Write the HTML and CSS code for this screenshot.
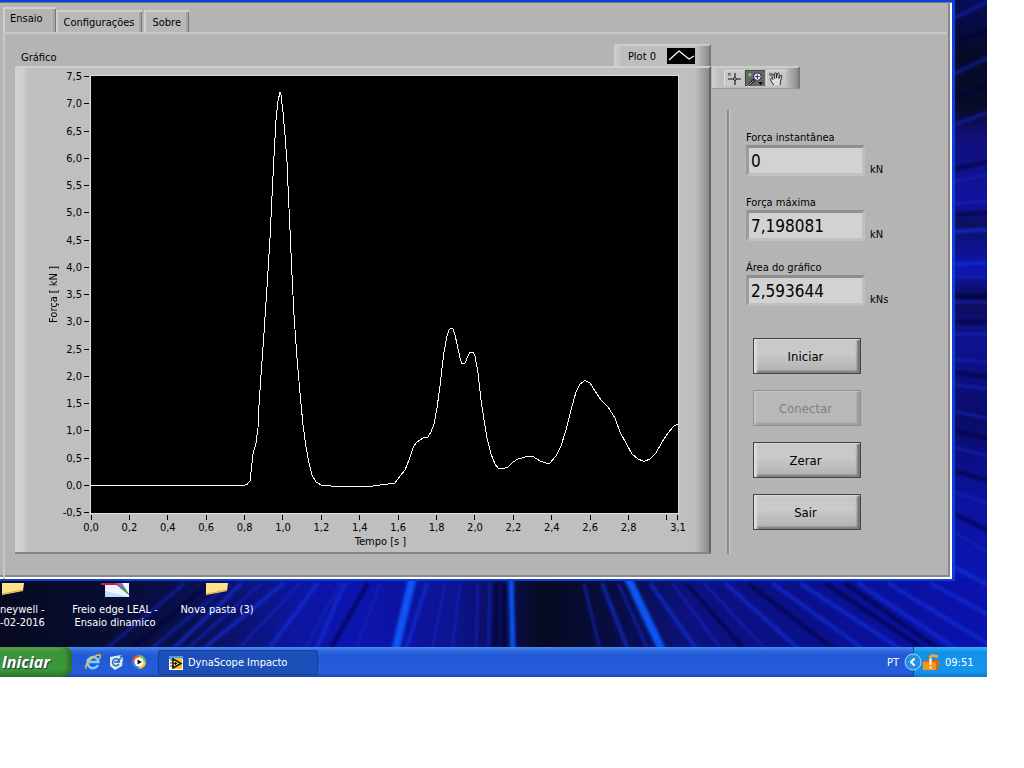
FILE: index.html
```html
<!DOCTYPE html>
<html lang="pt">
<head>
<meta charset="utf-8">
<title>DynaScope Impacto</title>
<link rel="stylesheet" href="styles.css">
</head>
<body>
<div class="desktop">
  <svg class="wallpaper" viewBox="0 0 987 677" preserveAspectRatio="none" aria-hidden="true">
    <defs>
      <linearGradient id="side" x1="0" y1="0" x2="0" y2="1">
        <stop offset="0" stop-color="#080c58"/><stop offset=".08" stop-color="#060a28"/><stop offset=".16" stop-color="#070b28"/>
        <stop offset=".2" stop-color="#101078"/><stop offset=".3" stop-color="#1212a0"/><stop offset=".33" stop-color="#0c1060"/>
        <stop offset=".4" stop-color="#1014b4"/><stop offset=".44" stop-color="#0a0c50"/><stop offset=".5" stop-color="#0e1290"/>
        <stop offset=".62" stop-color="#0a0c68"/><stop offset=".74" stop-color="#0c12a0"/><stop offset="1" stop-color="#0a18c8"/>
      </linearGradient>
      <linearGradient id="floor">
        <stop offset="0" stop-color="#070a20"/><stop offset=".1" stop-color="#080c30"/><stop offset=".2" stop-color="#0a1050"/>
        <stop offset=".3" stop-color="#0d16a0"/><stop offset=".36" stop-color="#0c14b0"/><stop offset=".46" stop-color="#0e1490"/>
        <stop offset=".5" stop-color="#0a0f60"/><stop offset=".55" stop-color="#060a20"/><stop offset=".62" stop-color="#080d40"/>
        <stop offset=".7" stop-color="#0c1280"/><stop offset=".8" stop-color="#0a1088"/><stop offset="1" stop-color="#0b12b0"/>
      </linearGradient>
      <filter id="soft"><feGaussianBlur stdDeviation="1.800"/></filter>
    </defs>
    <rect width="987" height="677" fill="url(#side)"/>
    <rect y="578" width="987" height="99" fill="url(#floor)"/>
    <g filter="url(#soft)" fill="none">
      <g stroke="#1424b0" stroke-width="3" opacity=".8">
        <path d="M950 20 995 -2M950 76 995 54M950 126 995 110"/>
        <path d="M950 182 995 174M950 204 995 200M950 277 995 277M950 302 995 302M950 334 995 334M950 359 995 363M950 384 995 390"/>
        <path d="M950 410 995 420M950 446 995 458M950 490 995 506M950 530 995 556M940 560 995 590"/>
        <path d="M185 583 105 650M230 583 150 650M262 583 186 650M300 583 238 650M340 583 305 650M380 583 356 650"/>
        <path d="M445 583 432 650M460 583 452 650M478 583 476 650M490 583 488 650"/>
        <path d="M584 583 600 650M618 583 648 650M672 583 722 650M704 583 766 650"/>
      </g>
      <g stroke="#1030d8" stroke-width="4" opacity=".7">
        <path d="M950 232 995 229M950 264 995 263"/>
        <path d="M242 583 172 650M284 583 202 650M318 583 268 650M345 583 316 650M427 583 406 650M602 583 628 650"/>
        <path d="M650 583 697 650M725 583 800 650M772 583 865 650M800 583 902 650M858 583 958 650M888 583 995 648M930 583 995 618M950 565 995 588"/>
      </g>
      <g stroke="#070a38" stroke-width="4" opacity=".65">
        <path d="M950 44 995 28M950 100 995 82M950 170 995 160M950 215 995 212M950 296 995 296M950 322 995 322M950 372 995 378M950 430 995 440M950 470 995 482M950 512 995 534"/>
        <path d="M210 583 130 650M368 583 330 650M496 583 496 650M504 583 504 650M686 583 745 650M748 583 835 650M825 583 925 650M845 583 940 650"/>
      </g>
      <path d="M413 576 394 656" stroke="#0a55f4" stroke-width="8"/>
      <path d="M511 576 513 656" stroke="#0a55f4" stroke-width="5"/>
      <path d="M627 576 662 650" stroke="#0a55f4" stroke-width="8"/>
    </g>
  </svg>

  <main class="window">
    <nav class="tabs">
      <button class="tab tab-active" type="button">Ensaio</button>
      <button class="tab" type="button">Configurações</button>
      <button class="tab" type="button">Sobre</button>
    </nav>
    <div class="page">
      <section class="graph">
        <header class="graph-head">
          <h2 class="graph-title">Gráfico</h2>
          <div class="legend">
            <span>Plot 0</span>
            <svg class="legend-swatch" viewBox="0 0 28 16" aria-hidden="true"><rect width="28" height="16"/><path d="M2 12 12 3 22 11 27 8" fill="none" stroke="#fff" stroke-width="1.200"/></svg>
          </div>
        </header>
        <div class="graph-panel">
          <div class="y-title"><span>Força [ kN ]</span></div>
          <div class="y-axis">
            <span>7,5</span><span>7,0</span><span>6,5</span><span>6,0</span><span>5,5</span><span>5,0</span><span>4,5</span><span>4,0</span><span>3,5</span><span>3,0</span><span>2,5</span><span>2,0</span><span>1,5</span><span>1,0</span><span>0,5</span><span>0,0</span><span>-0,5</span>
          </div>
          <svg class="plot" viewBox="91 76 587 437" preserveAspectRatio="none" role="img" aria-label="Força em função do tempo">
            <polyline points="91,485.500 243,485.500 247,484.500 250,481 252,463 253,454 256,443 258,428 259,405 261,375 264,333 267,287 270,238 272,196 274,156 276,120 278,101 280,92 281,95 283,112 285,135 287,162 288,186 290,230 292,275 294,315 297,358 300,393 303,425 306,447 309,463 312,475 316,482 322,485.500 340,486.500 370,486.500 376,485.500 385,484.500 395,483 400,476 405,470 409,460 413,448 416,443 420,440 423,438 428,437 431,432 434,424 437,408 440,386 442,368 444,352 447,336 449,330 451,328 453,329 455,335 457,344 460,358 462,364 465,363 468,356 470,352 473,352 475,356 478,373 481,400 484,420 487,438 491,454 495,464 498,468 503,468.500 508,467 513,462 518,459 527,456.500 533,456.500 540,461 546,463 550,463 556,456 561,446 566,430 571,410 576,392 580,384 585,380.500 590,383 595,391 601,400 608,407 615,418 620,432 627,445 632,454 638,459 644,461.500 650,459 656,453 662,442 668,433 674,426 678,424"/>
          </svg>
          <div class="x-axis">
            <span>0,0</span><span>0,2</span><span>0,4</span><span>0,6</span><span>0,8</span><span>1,0</span><span>1,2</span><span>1,4</span><span>1,6</span><span>1,8</span><span>2,0</span><span>2,2</span><span>2,4</span><span>2,6</span><span>2,8</span><span></span><span>3,1</span>
          </div>
          <div class="x-title">Tempo [s ]</div>
        </div>
      </section>

      <aside class="side">
        <div class="palette">
          <button class="tool" type="button" aria-label="Cursor"><svg viewBox="0 0 20 16"><path d="M3 2h3v3H3z" fill="#777"/><path d="M3 8.500h14M10.500 2v13" stroke="#111" stroke-width="1.200"/><circle cx="10.500" cy="8.500" r="1.500" fill="#dd6" stroke="#222"/></svg></button>
          <button class="tool tool-on" type="button" aria-label="Zoom"><svg viewBox="0 0 20 16"><path d="M2 4h4M4 2v4" stroke="#6f6" /><path d="M9 9 4 14" stroke="#111" stroke-width="3"/><path d="M8 10 4 14" stroke="#ddd"/><circle cx="12" cy="6" r="4" fill="#eef" stroke="#224"/><path d="M9.500 6h5M12 3.500v5" stroke="#225"/><path d="M13 12h5l-2.500 3z"/></svg></button>
          <button class="tool" type="button" aria-label="Mover"><svg viewBox="0 0 20 16"><path d="M2 2h3v3H2z" fill="#777"/><path d="M7 15 3.500 9.500C3 8 5 7.500 6 9L5 4.500C5 3 7 3 7.300 4.500L8 8 8 3C8.200 1.500 10 1.500 10 3v4.500L11 3c.5-1.500 2-1 2 .5L12.500 8 14 5c1-1 2-.5 1.600 1L14 12v3" fill="#ddd" stroke="#222"/></svg></button>
        </div>
        <div class="controls">
          <div class="field"><label for="inst">Força instantânea</label><input id="inst" type="text" value="0" readonly><span>kN</span></div>
          <div class="field"><label for="max">Força máxima</label><input id="max" type="text" value="7,198081" readonly><span>kN</span></div>
          <div class="field"><label for="area">Área do gráfico</label><input id="area" type="text" value="2,593644" readonly><span>kNs</span></div>
          <div class="actions">
            <button class="action" type="button">Iniciar</button>
            <button class="action" type="button" disabled>Conectar</button>
            <button class="action" type="button">Zerar</button>
            <button class="action" type="button">Sair</button>
          </div>
        </div>
      </aside>
    </div>
  </main>

  <div class="shortcuts">
    <div class="shortcut shortcut-cut">
      <svg viewBox="0 0 32 14" aria-hidden="true"><path d="M4 0H26L25 8 4 12z" fill="#ffe28a"/><path d="M4 11 25 7" stroke="#d9a93a"/></svg>
      <span>neywell -<br>-02-2016</span>
    </div>
    <div class="shortcut">
      <svg viewBox="0 0 32 14" aria-hidden="true"><path d="M6 0H30V14H6z" fill="#eef4ff"/><path d="M6 8 30 14H6z" fill="#bcdcf8"/><path d="M2 1h16l5 4" fill="none" stroke="#c3203c" stroke-width="2"/><path d="M17 0h6l8 13z" fill="#8a6fc8"/><path d="M21 5 31 13 25 4z" fill="#37a04a"/></svg>
      <span>Freio edge LEAL -<br>Ensaio dinamico</span>
    </div>
    <div class="shortcut">
      <svg viewBox="0 0 32 14" aria-hidden="true"><path d="M5 0H27L26 8 5 12z" fill="#ffe28a"/><path d="M5 11 26 7" stroke="#d9a93a"/></svg>
      <span>Nova pasta (3)</span>
    </div>
  </div>

  <footer class="taskbar">
    <button class="start" type="button"><span>Iniciar</span></button>
    <div class="quick">
      <svg viewBox="0 0 16 16" aria-hidden="true"><path d="M13 11A5.500 5.500 0 1 1 13.500 8H4" fill="none" stroke="#7fd0ff" stroke-width="2.500"/><path d="M1 15C-1 10 10 0 15 1c1 1 0 3-1 4" fill="none" stroke="#f3c33c" stroke-width="1.500"/></svg>
      <svg viewBox="0 0 16 16" aria-hidden="true"><path d="M2 3 13 1l2 3-1 8-7 4-5-4z" fill="#dcecf8"/><path d="M11 10A3.500 3.500 0 1 1 11.500 8H6M12 2l2 1-5 5" fill="none" stroke="#2b6cb8" stroke-width="1.500"/></svg>
      <svg viewBox="0 0 16 16" aria-hidden="true"><path d="M8 8V1A7 7 0 0 1 15 8z" fill="#7cc242"/><path d="M8 8H15A7 7 0 0 1 8 15z" fill="#f6c12c"/><path d="M8 8V15A7 7 0 0 1 1 8z" fill="#3b82e0"/><path d="M8 8H1A7 7 0 0 1 8 1z" fill="#ee5a24"/><circle cx="8" cy="8" r="4.500" fill="#fff"/><path d="M6.500 5.500 11 8 6.500 10.500z" fill="#111"/></svg>
    </div>
    <button class="task" type="button">
      <svg viewBox="0 0 14 14" aria-hidden="true"><path d="M0 0h14v14H0z" fill="#fff"/><path d="M0 0h14v3H0z" fill="#49a0e8"/><path d="M3 2H13V13H3z" fill="#f2c81e"/><path d="M1 4h3M1 7h3M1 10h3" stroke="#335"/><path d="M4 3 12 7.500 4 12z" fill="#f7de3e" stroke="#111" stroke-width="1.500"/><path d="M5 7.500h3M6.500 6v3" stroke="#111"/></svg>
      DynaScope Impacto
    </button>
    <span class="lang">PT</span>
    <div class="tray">
      <button class="expand" type="button" aria-label="Mostrar ícones"><svg viewBox="0 0 18 18"><circle cx="9" cy="9" r="8" fill="#2a8fe0" stroke="#9cd8fb"/><path d="M10.500 5.500 7 9l3.500 3.500" fill="none" stroke="#fff" stroke-width="2"/></svg></button>
      <svg class="alert" viewBox="0 0 16 16" aria-hidden="true"><path d="M0 8 3 6H16V14L13 16H0z" fill="#d8690c"/><path d="M0 8H13V16H0z" fill="#f4961c"/><path d="M6 6V2L9 0 15 1V4L9 3V6z" fill="#e8a848"/><path d="M7.500 5v6M7.500 12.500v2" stroke="#fff" stroke-width="2"/></svg>
      <time>09:51</time>
    </div>
  </footer>
</div>
</body>
</html>
```
FILE: styles.css
```css
* { box-sizing: border-box; }
body {
  margin: 0;
  background: #fff;
  color: #000;
  font: 11px/13px "DejaVu Sans Condensed", "DejaVu Sans", sans-serif;
}
button, input { font: inherit; color: inherit; margin: 0; padding: 0; border: 0; border-radius: 0; background: none; }
svg { display: block; }

.desktop { position: relative; margin-right: 37px; overflow: hidden; }
.wallpaper { position: absolute; inset: 0; width: 100%; height: 100%; z-index: -1; }

/* application window */
.window {
  margin-right: 32px;
  padding-left: 3px;
  background: #b4b4b4;
  border: solid #0a3fd8;
  border-width: 2px 3px 2px 0;
  box-shadow: inset 0 1px #777, inset -2px -2px #fff, inset -4px -4px #888;
}
.tabs { display: flex; align-items: flex-end; padding-top: 5px; }
.tab {
  height: 22px;
  padding: 0 8px 0 6px;
  border: solid #d0d0d0;
  border-width: 2px 0 0 2px;
  box-shadow: inset -1px 0 #777, inset -3px 0 #a4a4a4;
  background: #b8b8b8;
}
.tab + .tab { margin-right: 2px; }
.tab-active { height: 25px; padding: 0 13px 5px 5px; background: #b4b4b4; }
.page {
  display: flex;
  margin-right: 5px;
  padding: 10px 0 25px 10px;
  border-left: 2px solid #c8c8c8;
  border-top: 2px solid #c8c8c8;
}

/* graph */
.graph { flex: 1; }
.graph-head { display: flex; justify-content: space-between; align-items: flex-end; }
.graph-title { margin: 0 0 2px 6px; font: inherit; }
.legend {
  display: flex;
  align-items: center;
  gap: 11px;
  height: 22px;
  padding: 0 14px;
  border-top: 2px solid #ccc;
  border-right: 2px solid #777;
  background: linear-gradient(90deg, #d0d0d0, #bebebe 8px, #bebebe calc(100% - 12px), #8c8c8c);
}
.legend-swatch { width: 28px; height: 16px; }
.graph-panel {
  display: grid;
  grid-template-columns: 36px 20px 1fr;
  grid-template-rows: auto 22px 16px;
  padding: 8px 31px 1px 20px;
  border: solid #d0d0d0;
  border-width: 2px 2px 2px 0;
  border-right-color: #666;
  border-bottom-color: #858585;
  background: linear-gradient(90deg, #d2d2d2, #d0d0d0 8px, #bfbfbf 13px, #bfbfbf calc(100% - 14px), #8a8a8a);
}
.y-title { display: flex; align-items: center; justify-content: center; }
.y-title span { writing-mode: vertical-rl; rotate: 180deg; white-space: nowrap; }
.y-axis { display: flex; flex-direction: column; justify-content: space-between; }
.y-axis span { display: flex; align-items: center; justify-content: flex-end; gap: 2px; height: 1px; white-space: nowrap; }
.y-axis span::after { content: ""; flex: none; width: 5px; height: 1px; margin-right: 2px; background: #000; }
.plot { width: 100%; height: 437px; background: #000; outline: 1px solid #ddd; }
.plot polyline { fill: none; stroke: #fff; shape-rendering: crispEdges; vector-effect: non-scaling-stroke; }
.x-axis { grid-column: 3; display: grid; grid-template-columns: repeat(15, 383fr) 110fr 0; }
.x-axis span { display: flex; flex-direction: column; align-items: center; gap: 1px; width: 0; white-space: nowrap; }
.x-axis span::before { content: ""; width: 1px; height: 5px; margin-top: 2px; background: #000; }
.x-title { grid-column: 3; padding-right: 8px; text-align: center; }

/* right column */
.side { display: flex; flex-direction: column; width: 236px; padding-top: 22px; }
.palette {
  display: flex;
  align-self: flex-start;
  gap: 1px;
  margin-left: 1px;
  padding: 2px 12px 2px 12px;
  border: solid #ccc;
  border-width: 2px 2px 1px 0;
  border-right-color: #777;
  border-bottom-color: #999;
  background: linear-gradient(90deg, #d0d0d0, #bebebe 8px, #bebebe calc(100% - 12px), #8c8c8c);
}
.tool { padding: 0; background: #c8c8c8; border: solid #ddd; border-width: 1px 0 0 1px; }
.tool svg { width: 19px; height: 15px; }
.tool-on { background: #666; border-color: #444; }
.controls { flex: 1; margin: 21px 0 0 16px; padding: 21px 0 20px 17px; border-left: 2px solid #8a8a8a; box-shadow: inset 1px 0 #ccc; }
.field { display: grid; grid-template-columns: 119px 1fr; align-items: end; column-gap: 5px; margin-bottom: 20px; }
.field label { grid-column: 1 / 3; line-height: 14px; }
.field input {
  width: 100%;
  height: 31px;
  padding-left: 2px;
  border: 3px solid #8f8f8f;
  border-left-color: #9c9c9c;
  border-right-color: #c0c0c0;
  border-bottom-color: #c0c0c0;
  background: #d2d2d2;
  font-size: 17px;
}
.actions { display: grid; gap: 16px; width: 108px; margin: 32px 0 0 7px; }
.action {
  height: 36px;
  padding-right: 3px;
  border: 1px solid #444;
  box-shadow: inset 3px 1px 2px #ddd, inset -3px -2px 2px #777;
  background: linear-gradient(#c6c6c6, #cacaca 40%, #b0b0b0);
  font-size: 13px;
}
.action:disabled { color: #808080; border-color: #909090; background: #b8b8b8; box-shadow: inset 2px 1px 1px #c6c6c6, inset -3px -2px 2px #9a9a9a; }

/* desktop icons */
.shortcuts { display: flex; height: 66px; padding-top: 2px; color: #fff; text-align: center; }
.shortcut { width: 102px; white-space: nowrap; }
.shortcut svg { width: 32px; height: 14px; margin: 0 auto 6px; }
.shortcut-cut { width: 64px; }
.shortcut-cut svg { margin-left: -2px; }
.shortcut-cut span { display: block; width: 42px; }

/* taskbar */
.taskbar {
  display: flex;
  align-items: stretch;
  height: 30px;
  background: linear-gradient(#4a8cf0, #2a62dc 5px, #2258d4 10px, #245ddc 26px, #1a44a8);
  color: #fff;
}
.start {
  display: flex;
  justify-content: flex-end;
  align-items: center;
  width: 72px;
  padding-right: 22px;
  overflow: hidden;
  border-radius: 0 8px 10px 0;
  background: linear-gradient(#6ab85e, #3c9338 5px, #3c9a3a 22px, #2c7a2c);
  box-shadow: inset -4px 0 4px #2a702a;
  font: italic bold 16px/20px "Open Sans", "Noto Sans", sans-serif;
  text-shadow: 1px 1px 1px #234;
}
.quick { display: flex; align-items: center; gap: 7px; padding: 0 11px 0 13px; }
.quick svg { width: 16px; height: 16px; }
.task {
  display: flex;
  align-items: center;
  gap: 5px;
  width: 160px;
  margin: 3px auto 2px 0;
  padding-left: 10px;
  border: 1px solid #173f9a;
  border-radius: 2px;
  background: #1c4fb8;
}
.task svg { width: 14px; height: 14px; }
.lang { align-self: center; padding-right: 14px; }
.tray {
  display: flex;
  align-items: center;
  width: 74px;
  border-left: 1px solid #0c4c9c;
  background: linear-gradient(#38b4f8, #1490e8 5px, #1496ec 24px, #1078c8);
}
.expand { margin-left: -10px; }
.expand svg { width: 18px; height: 18px; }
.alert { width: 16px; height: 16px; margin: 0 6px 0 1px; }
```
